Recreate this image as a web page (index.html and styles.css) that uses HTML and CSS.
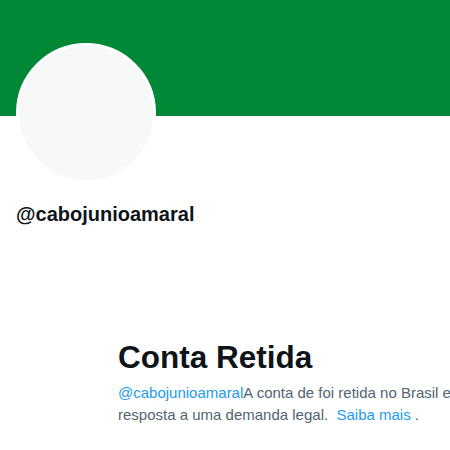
FILE: index.html
```html
<!DOCTYPE html>
<html lang="pt-BR">
<head>
    <meta charset="UTF-8">
    <title>@cabojunioamaral</title>
    <link rel="stylesheet" href="styles.css">
</head>
<body>
    <div class="banner"></div>
    <div class="profile">
        <div class="avatar"></div>
        <div class="handle">@cabojunioamaral</div>
    </div>
    <div class="notice">
        <h1>Conta Retida</h1>
        <p><a href="#">@cabojunioamaral</a>A conta de foi retida no Brasil em resposta a uma demanda legal. &nbsp;<a href="#">Saiba mais</a> .</p>
    </div>
</body>
</html>
```
FILE: styles.css
```css
body {
    margin: 0;
    font-family: "Liberation Sans", Arial, sans-serif;
    background-color: #ffffff;
    color: #0f1419;
    overflow: hidden;
}
.banner {
    height: 116px;
    background-color: #008837;
}
.profile {
    padding: 0 16px;
}
.avatar {
    width: 134px;
    height: 134px;
    margin-top: -73px;
    border: 3px solid #ffffff;
    border-radius: 50%;
    background-color: #f7f9f9;
}
.handle {
    margin-top: 20px;
    font-weight: bold;
    font-size: 20px;
}
.notice {
    margin: 112px 0 0 118px;
    width: 360px;
}
h1 {
    margin: 0 0 6px;
    font-size: 31.5px;
    font-weight: bold;
    line-height: 38px;
}
p {
    margin: 0;
    font-size: 15px;
    line-height: 22px;
    color: #536471;
}
a {
    color: #1d9bf0;
    text-decoration: none;
}
```
